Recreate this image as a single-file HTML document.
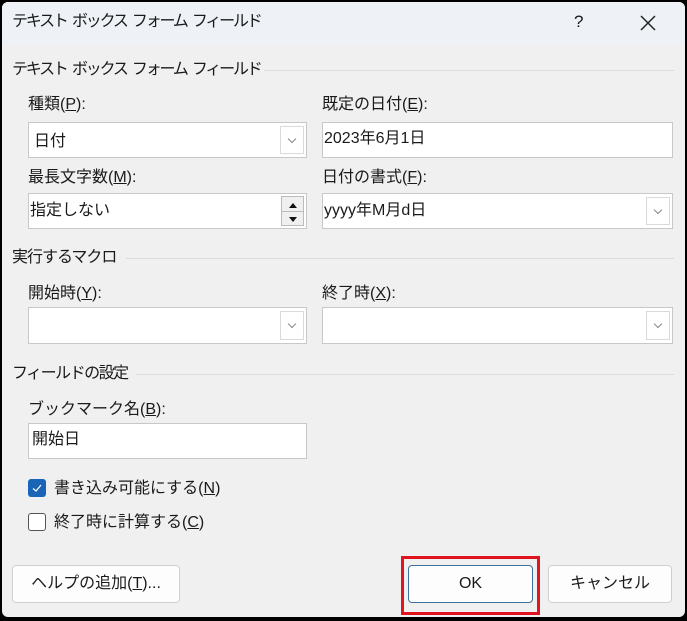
<!DOCTYPE html>
<html><head><meta charset="utf-8"><style>
*{box-sizing:border-box;margin:0;padding:0}
body{width:687px;height:621px;background:#000;position:relative;overflow:hidden;font-family:"Liberation Sans","Noto Sans CJK JP",sans-serif;font-size:16px;color:#1a1a1a}
.dlg{position:absolute;left:2px;top:2px;width:683px;height:615px;background:#f0f0f0;border-radius:6px;overflow:hidden}
.title{position:absolute;left:0;top:0;width:100%;height:43px;background:#eef2f6}
.a{position:absolute;white-space:nowrap;line-height:20px}
.k{letter-spacing:-2.2px;word-spacing:3px}
.sec{position:absolute;height:1px;background:#dcdcdc}
.box{position:absolute;background:#fff;border:1px solid #c8c8c8}
.dd{position:absolute;right:2px;top:3px;bottom:3px;width:24px;border:1px solid #dadada;background:#fff}
.dd:after{content:"";position:absolute;left:8px;top:9px;width:5px;height:5px;border-right:1px solid #888;border-bottom:1px solid #888;transform:rotate(45deg)}
.btn{position:absolute;background:#fdfdfd;border:1px solid #d0d0d0;border-radius:4px;text-align:center;line-height:36px}
u{text-decoration:underline}
.cb{position:absolute;width:18px;height:18px;border-radius:3px}
</style></head><body>
<div class="dlg">
<div class="title"></div>
<div class="a k" style="left:10px;top:10px">テキスト ボックス フォーム フィールド</div>
<div class="a" style="left:572px;top:10px;font-size:17px">?</div>
<svg style="position:absolute;left:638px;top:13px" width="16" height="16"><path d="M1 1L15 15M15 1L1 15" stroke="#222" stroke-width="1.5"/></svg>

<div class="a k" style="left:10px;top:58px">テキスト ボックス フォーム フィールド</div>
<div class="sec" style="left:262px;top:68px;width:410px"></div>
<div class="a" style="left:26px;top:93px">種類(<u>P</u>):</div>
<div class="a" style="left:320px;top:93px">既定の日付(<u>E</u>):</div>
<div class="box" style="left:26px;top:120px;width:279px;height:36px"><div class="a" style="left:5px;top:9px">日付</div><div class="dd"></div></div>
<div class="box" style="left:320px;top:120px;width:351px;height:36px"><div class="a" style="left:1px;top:6px">2023年6月1日</div></div>
<div class="a" style="left:26px;top:166px">最長文字数(<u>M</u>):</div>
<div class="a" style="left:320px;top:166px">日付の書式(<u>F</u>):</div>
<div class="box" style="left:26px;top:191px;width:279px;height:36px"><div class="a" style="left:1px;top:7px">指定しない</div>
<div style="position:absolute;right:2px;top:2px;width:23px;height:30px;border:1px solid #bbb;background:#f0f0f0">
<div style="position:absolute;left:0;right:0;top:14px;height:1px;background:#bbb"></div>
<svg style="position:absolute;left:5px;top:3px" width="12" height="24"><path d="M2 8L6 3L10 8Z M2 17L10 17L6 22Z" fill="#111"/></svg></div></div>
<div class="box" style="left:320px;top:191px;width:351px;height:36px"><div class="a" style="left:1px;top:7px">yyyy年M月d日</div><div class="dd"></div></div>

<div class="a" style="left:10px;top:246px;letter-spacing:-1px">実行するマクロ</div>
<div class="sec" style="left:124px;top:256px;width:548px"></div>
<div class="a" style="left:26px;top:282px">開始時(<u>Y</u>):</div>
<div class="a" style="left:320px;top:282px">終了時(<u>X</u>):</div>
<div class="box" style="left:26px;top:305px;width:279px;height:37px"><div class="dd"></div></div>
<div class="box" style="left:320px;top:305px;width:351px;height:37px"><div class="dd"></div></div>

<div class="a" style="left:10px;top:362px;letter-spacing:-1.5px">フィールドの設定</div>
<div class="sec" style="left:134px;top:372px;width:538px"></div>
<div class="a" style="left:26px;top:398px">ブックマーク名(<u>B</u>):</div>
<div class="box" style="left:26px;top:421px;width:279px;height:36px"><div class="a" style="left:3px;top:6px">開始日</div></div>

<div class="cb" style="left:26px;top:477px;background:#1a65b8"><svg width="18" height="18"><path d="M5 9.5L8 12L13 6" stroke="#fff" stroke-width="1.2" fill="none"/></svg></div>
<div class="a" style="left:52px;top:477px">書き込み可能にする(<u>N</u>)</div>
<div class="cb" style="left:26px;top:511px;border:1px solid #555;background:#fff"></div>
<div class="a" style="left:52px;top:511px">終了時に計算する(<u>C</u>)</div>

<div class="btn" style="left:10px;top:563px;width:168px;height:38px">ヘルプの追加(<u>T</u>)...</div>
<div style="position:absolute;left:399px;top:554px;width:139px;height:59px;border:3px solid #e0141e"></div>
<div class="btn" style="left:406px;top:563px;width:125px;height:38px;border-color:#3d6fa0">OK</div>
<div class="btn" style="left:546px;top:563px;width:124px;height:38px">キャンセル</div>
</div>
</body></html>
